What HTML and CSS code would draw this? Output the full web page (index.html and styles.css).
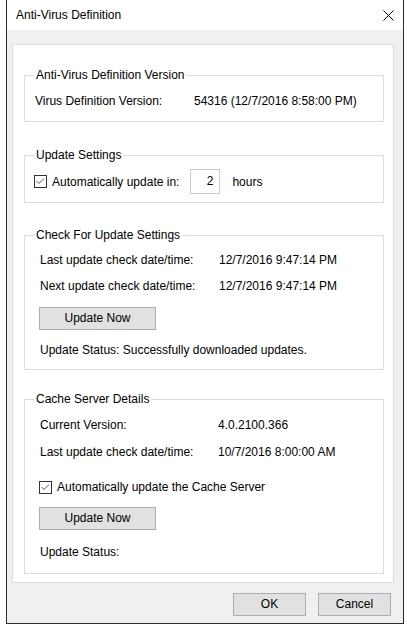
FILE: index.html
```html
<!DOCTYPE html>
<html>
<head>
<meta charset="utf-8">
<link rel="stylesheet" href="styles.css">
</head>
<body>
<div class="window">
  <div class="titlebar">
    <span class="title">Anti-Virus Definition</span>
    <svg class="close" width="11" height="11" viewBox="0 0 11 11"><path d="M0.5 0.5 L10.5 10.5 M10.5 0.5 L0.5 10.5" stroke="#000" stroke-width="1" fill="none"/></svg>
  </div>
  <div class="body">
    <div class="panel">
      <fieldset class="group g1">
        <legend>Anti-Virus Definition Version</legend>
        <div class="gbody">
          <div class="row r1"><span class="lbl w1">Virus Definition Version:</span><span>54316 (12/7/2016 8:58:00 PM)</span></div>
        </div>
      </fieldset>
      <fieldset class="group g2">
        <legend>Update Settings</legend>
        <div class="gbody">
          <div class="checkrow cr2">
            <svg class="cb" width="13" height="13" viewBox="0 0 13 13"><rect x="0.5" y="0.5" width="12" height="12" fill="#fff" stroke="#333"/><path d="M2.5 6 L5 8.5 L10 3.5" fill="none" stroke="#555" stroke-width="1"/></svg>
            <span class="cbtext">Automatically update in:</span>
            <span class="num">2</span>
            <span class="unit">hours</span>
          </div>
        </div>
      </fieldset>
      <fieldset class="group g3">
        <legend>Check For Update Settings</legend>
        <div class="gbody">
          <div class="row r3a"><span class="lbl w3">Last update check date/time:</span><span>12/7/2016 9:47:14 PM</span></div>
          <div class="row r3b"><span class="lbl w3">Next update check date/time:</span><span>12/7/2016 9:47:14 PM</span></div>
          <button class="btn upd b3">Update Now</button>
          <div class="row r3c">Update Status: Successfully downloaded updates.</div>
        </div>
      </fieldset>
      <fieldset class="group g4">
        <legend>Cache Server Details</legend>
        <div class="gbody">
          <div class="row r4a"><span class="lbl w4">Current Version:</span><span>4.0.2100.366</span></div>
          <div class="row r4b"><span class="lbl w4">Last update check date/time:</span><span>10/7/2016 8:00:00 AM</span></div>
          <div class="checkrow cr4">
            <svg class="cb" width="13" height="13" viewBox="0 0 13 13"><rect x="0.5" y="0.5" width="12" height="12" fill="#fff" stroke="#333"/><path d="M2.5 6 L5 8.5 L10 3.5" fill="none" stroke="#555" stroke-width="1"/></svg>
            <span class="cbtext">Automatically update the Cache Server</span>
          </div>
          <button class="btn upd b4">Update Now</button>
          <div class="row r4c">Update Status:</div>
        </div>
      </fieldset>
    </div>
    <div class="footer">
      <button class="btn dlg">OK</button>
      <button class="btn dlg">Cancel</button>
    </div>
  </div>
</div>
</body>
</html>
```

FILE: styles.css
```css
html, body {
  margin: 0;
  padding: 0;
  background: #fff;
}
body {
  font-family: "Liberation Sans", Arial, sans-serif;
  font-size: 12px;
  color: #000;
}
.window {
  margin-left: 6px;
  width: 398px;
  box-sizing: border-box;
  border-left: 1px solid #2a2a2a;
  border-right: 1px solid #2a2a2a;
  border-bottom: 1px solid #2a2a2a;
}
.titlebar {
  height: 30px;
  background: #fff;
  display: flex;
  align-items: center;
  justify-content: space-between;
  padding: 0 9px 0 9px;
}
.title {
  font-size: 12px;
  line-height: 14px;
}
.close {
  display: block;
  margin-top: 1px;
}
.body {
  background: #f0f0f0;
  padding: 14px 0 7px 0;
}
.panel {
  margin-left: 5px;
  width: 382px;
  height: 539px;
  box-sizing: border-box;
  background: #fff;
  border: 1px solid #dcdcdc;
  padding-top: 1px;
}
.group {
  margin: 0 9px 0 11px;
  border: 1px solid #dcdcdc;
  padding: 0;
  min-width: 0;
}
.group legend {
  margin-left: 9px;
  padding: 0 2px;
  line-height: 14px;
}
.g1 { margin-top: 22px; padding-bottom: 13px; }
.g2 { margin-top: 26px; padding-bottom: 8px; }
.g3 { margin-top: 25px; padding-bottom: 12px; }
.g4 { margin-top: 22px; padding-bottom: 14px; }
.g1 .gbody { padding-left: 10px; }
.g2 .gbody { padding-left: 9px; }
.g3 .gbody, .g4 .gbody { padding-left: 14px; }
.row {
  display: flex;
  line-height: 14px;
  height: 14px;
  white-space: nowrap;
}
.lbl { display: inline-block; }
.w1 { width: 159px; }
.w3 { width: 179px; }
.w4 { width: 178px; }
.r1 { margin-top: 12px; }
.r3a { margin-top: 11px; margin-left: 1px; }
.r3b { margin-top: 12px; margin-left: 1px; }
.r3c { margin-top: 13px; margin-left: 1px; }
.r4a { margin-top: 12px; margin-left: 1px; }
.r4b { margin-top: 13px; margin-left: 1px; }
.r4c { margin-top: 15px; margin-left: 1px; }
.checkrow {
  display: flex;
  align-items: center;
  white-space: nowrap;
  line-height: 14px;
}
.cb { display: block; flex: none; }
.cbtext { margin-left: 5px; }
.cr2 { margin-top: 7px; height: 25px; }
.cr4 { margin-top: 21px; height: 14px; }
.num {
  margin-left: 11px;
  width: 30px;
  height: 25px;
  box-sizing: border-box;
  border: 1px solid #c8c8c8;
  background: #fff;
  text-align: right;
  padding-right: 6px;
  line-height: 23px;
}
.unit { margin-left: 12px; }
.btn {
  font-family: "Liberation Sans", Arial, sans-serif;
  font-size: 12px;
  color: #000;
  background: #e1e1e1;
  border: 1px solid #adadad;
  padding: 0;
  margin: 0;
  height: 23px;
  line-height: 21px;
  box-sizing: border-box;
  display: block;
}
.upd { width: 117px; }
.b3 { margin-top: 14px; }
.b4 { margin-top: 13px; }
.footer {
  display: flex;
  justify-content: flex-end;
  gap: 12px;
  padding-right: 12px;
  margin-top: 10px;
}
.dlg { width: 73px; }
```
